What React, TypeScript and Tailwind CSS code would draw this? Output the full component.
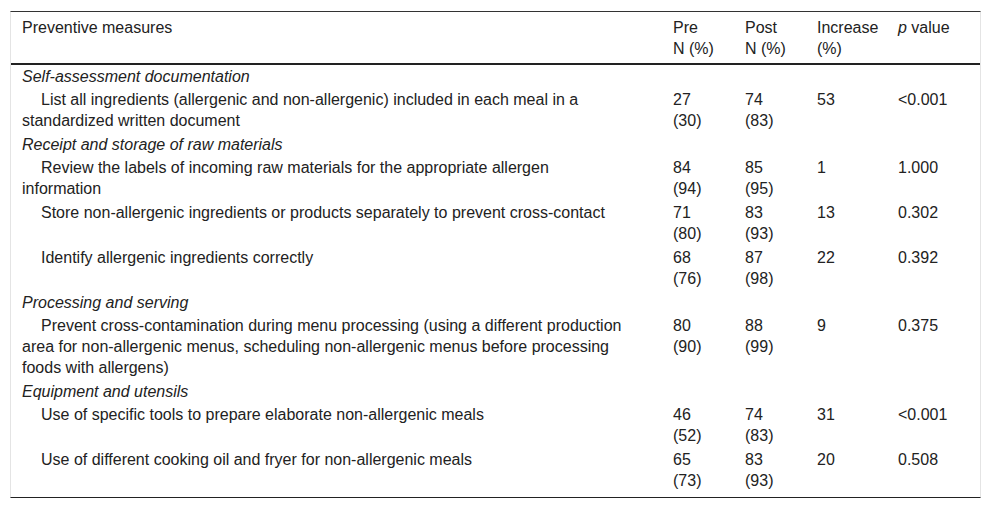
import React from "react";

type Row =
  | { kind: "cat"; label: string }
  | { kind: "item"; label: string; pre: [string, string]; post: [string, string]; inc: string; p: string };

const rows: Row[] = [
  { kind: "cat", label: "Self-assessment documentation" },
  {
    kind: "item",
    label: "List all ingredients (allergenic and non-allergenic) included in each meal in a standardized written document",
    pre: ["27", "(30)"],
    post: ["74", "(83)"],
    inc: "53",
    p: "<0.001",
  },
  { kind: "cat", label: "Receipt and storage of raw materials" },
  {
    kind: "item",
    label: "Review the labels of incoming raw materials for the appropriate allergen information",
    pre: ["84", "(94)"],
    post: ["85", "(95)"],
    inc: "1",
    p: "1.000",
  },
  {
    kind: "item",
    label: "Store non-allergenic ingredients or products separately to prevent cross-contact",
    pre: ["71", "(80)"],
    post: ["83", "(93)"],
    inc: "13",
    p: "0.302",
  },
  {
    kind: "item",
    label: "Identify allergenic ingredients correctly",
    pre: ["68", "(76)"],
    post: ["87", "(98)"],
    inc: "22",
    p: "0.392",
  },
  { kind: "cat", label: "Processing and serving" },
  {
    kind: "item",
    label:
      "Prevent cross-contamination during menu processing (using a different production area for non-allergenic menus, scheduling non-allergenic menus before processing foods with allergens)",
    pre: ["80", "(90)"],
    post: ["88", "(99)"],
    inc: "9",
    p: "0.375",
  },
  { kind: "cat", label: "Equipment and utensils" },
  {
    kind: "item",
    label: "Use of specific tools to prepare elaborate non-allergenic meals",
    pre: ["46", "(52)"],
    post: ["74", "(83)"],
    inc: "31",
    p: "<0.001",
  },
  {
    kind: "item",
    label: "Use of different cooking oil and fryer for non-allergenic meals",
    pre: ["65", "(73)"],
    post: ["83", "(93)"],
    inc: "20",
    p: "0.508",
  },
];

const grid = "grid grid-cols-[654px_72px_72px_81px_90px]";

export default function App() {
  return (
    <div className="min-h-[510px] w-[992px] bg-white pt-[11px] font-['Liberation_Sans',Arial,sans-serif] text-[16px] leading-[21px] text-[#222]">
      <div className="ml-[10px] w-[971px] border-x border-x-[#e4e4e4] border-t border-t-[#333] border-b border-b-[#222] pb-[4px]">
        <div className={`${grid} border-b-2 border-b-[#222] pt-[5px] pb-[4px]`}>
          <div className="pl-[11px]">Preventive measures</div>
          <div className="pl-2">
            <span className="block">Pre</span>
            <span className="block">N (%)</span>
          </div>
          <div className="pl-2">
            <span className="block">Post</span>
            <span className="block">N (%)</span>
          </div>
          <div className="pl-2">
            <span className="block">Increase</span>
            <span className="block">(%)</span>
          </div>
          <div className="pl-2">
            <i>p</i> value
          </div>
        </div>
        {rows.map((r, i) =>
          r.kind === "cat" ? (
            <div key={i} className={`${grid} pt-[1px] pb-[1px]`}>
              <div className="pl-[11px] italic">{r.label}</div>
            </div>
          ) : (
            <div key={i} className={`${grid} pt-[1px] pb-[2px]`}>
              <div className="pl-[11px] pr-[40px] indent-[19px]">{r.label}</div>
              <div className="pl-2">
                <span className="block">{r.pre[0]}</span>
                <span className="block">{r.pre[1]}</span>
              </div>
              <div className="pl-2">
                <span className="block">{r.post[0]}</span>
                <span className="block">{r.post[1]}</span>
              </div>
              <div className="pl-2">{r.inc}</div>
              <div className="pl-2">{r.p}</div>
            </div>
          )
        )}
      </div>
    </div>
  );
}
